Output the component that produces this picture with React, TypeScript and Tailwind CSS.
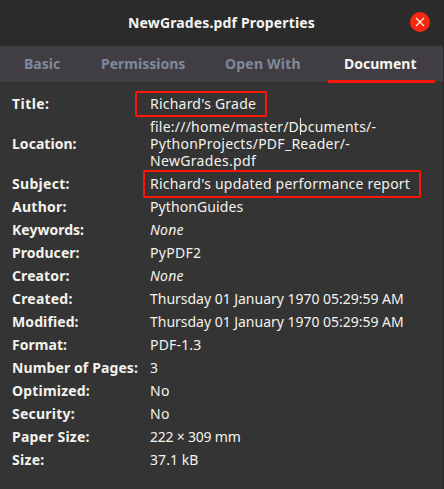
type Line = { text: string; tracking: string };
type Property = {
  label: string;
  labelTracking: string;
  lines: Line[];
  italic?: boolean;
  marked?: string;
};

const properties: Property[] = [
  {
    label: "Title:",
    labelTracking: "tracking-[0.45px]",
    lines: [{ text: "Richard's Grade", tracking: "tracking-[0.22px]" }],
    marked: "-top-[4px] -left-[15px] h-[26px] w-[132px]",
  },
  {
    label: "Location:",
    labelTracking: "tracking-[0.04px]",
    lines: [
      { text: "file:///home/master/Documents/-", tracking: "tracking-[0.22px]" },
      { text: "PythonProjects/PDF_Reader/-", tracking: "tracking-[0.27px]" },
      { text: "NewGrades.pdf", tracking: "tracking-[0.33px]" },
    ],
  },
  {
    label: "Subject:",
    labelTracking: "tracking-[0.3px]",
    lines: [{ text: "Richard's updated performance report", tracking: "tracking-[0.22px]" }],
    marked: "-top-[5px] -left-[7px] h-[28px] w-[278px]",
  },
  { label: "Author:", labelTracking: "tracking-[0.26px]", lines: [{ text: "PythonGuides", tracking: "tracking-[0.1px]" }] },
  { label: "Keywords:", labelTracking: "tracking-[0.01px]", lines: [{ text: "None", tracking: "tracking-[0.2px]" }], italic: true },
  { label: "Producer:", labelTracking: "tracking-[0.05px]", lines: [{ text: "PyPDF2", tracking: "tracking-[0.3px]" }] },
  { label: "Creator:", labelTracking: "tracking-[0.1px]", lines: [{ text: "None", tracking: "tracking-[0.2px]" }], italic: true },
  { label: "Created:", labelTracking: "tracking-[0.2px]", lines: [{ text: "Thursday 01 January 1970 05:29:59 AM", tracking: "tracking-[-0.02px]" }] },
  { label: "Modified:", labelTracking: "tracking-[0.1px]", lines: [{ text: "Thursday 01 January 1970 05:29:59 AM", tracking: "tracking-[-0.02px]" }] },
  { label: "Format:", labelTracking: "tracking-[0.04px]", lines: [{ text: "PDF-1.3", tracking: "tracking-[0.18px]" }] },
  { label: "Number of Pages:", labelTracking: "tracking-[0.11px]", lines: [{ text: "3", tracking: "tracking-normal" }] },
  { label: "Optimized:", labelTracking: "tracking-[0.19px]", lines: [{ text: "No", tracking: "tracking-[0.44px]" }] },
  { label: "Security:", labelTracking: "tracking-[0.22px]", lines: [{ text: "No", tracking: "tracking-[0.44px]" }] },
  { label: "Paper Size:", labelTracking: "tracking-[0.22px]", lines: [{ text: "222 × 309 mm", tracking: "tracking-[-0.22px]" }] },
  { label: "Size:", labelTracking: "tracking-[0.3px]", lines: [{ text: "37.1 kB", tracking: "tracking-[0.08px]" }] },
];

function TitleBar() {
  return (
    <header className="relative flex h-[46px] items-center justify-center bg-[#2b2b2b] pr-px pb-[2px]">
      <h1 className="text-[14px] font-bold tracking-[0.15px] text-[#f5f4ef]">NewGrades.pdf Properties</h1>
      <button aria-label="Close" className="absolute top-[12px] right-[14px] size-5 rounded-full bg-[#f8260f]">
        <svg viewBox="0 0 20 20" className="size-5" fill="none" stroke="#fdf3e4" strokeWidth="1.3">
          <path d="M6 6l8 8M14 6l-8 8" />
        </svg>
      </button>
    </header>
  );
}

function Tabs() {
  return (
    <nav className="flex h-[37px] border-b border-[#2c2b2c] bg-[#403e43] text-[14px] leading-[36px] font-bold text-[#80899c]">
      <span className="ml-[24px] w-[77px]">Basic</span>
      <span className="w-[124px]">Permissions</span>
      <span className="w-[103px] tracking-[0.2px]">Open With</span>
      <span className="h-[37px] w-[107px] border-b-[3px] border-[#fb1607] pl-[16px] text-[#f5f4ef]">Document</span>
    </nav>
  );
}

function PropertyRow({ property }: { property: Property }) {
  return (
    <div className="flex items-center">
      <dt className={`w-[138px] whitespace-nowrap font-bold ${property.labelTracking}`}>{property.label}</dt>
      <dd className={`relative whitespace-nowrap ${property.italic ? "italic" : ""}`}>
        {property.lines.map((line) => (
          <div key={line.text} className={line.tracking}>
            {line.text}
          </div>
        ))}
        {property.marked && <span className={`absolute rounded-[2px] border-2 border-[#fb1607] ${property.marked}`} />}
      </dd>
    </div>
  );
}

export default function App() {
  return (
    <main className="relative h-[489px] w-[444px] overflow-hidden bg-[#343434] font-['Noto_Sans','Open_Sans',sans-serif] text-[14px] leading-[17px] text-[#f3f2ec]">
      <TitleBar />
      <Tabs />
      <dl className="flex flex-col gap-[6px] pt-[12px] pl-[12px]">
        {properties.map((property) => (
          <PropertyRow key={property.label} property={property} />
        ))}
      </dl>
      <span className="absolute top-[118px] left-[300px] h-[17px] w-px bg-[#f3f2ec]" />
      <span className="absolute inset-y-0 right-0 w-px bg-[#292829]" />
    </main>
  );
}
